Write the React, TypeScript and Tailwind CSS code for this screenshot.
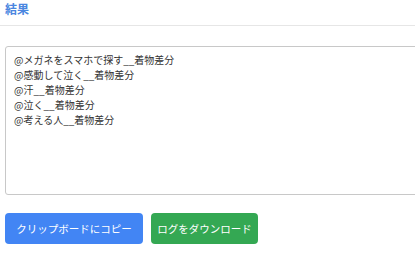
const lines = [
  "@メガネをスマホで探す__着物差分",
  "@感動して泣く__着物差分",
  "@汗__着物差分",
  "@泣く__着物差分",
  "@考える人__着物差分",
]

export default function App() {
  return (
    <div
      className="w-[415px] h-[253px] overflow-hidden bg-white"
      style={{ fontFamily: '"Noto Sans CJK JP", "Noto Sans", sans-serif' }}
    >
      <div className="w-[440px]">
        <div className="border-b border-[#e6e6e6] px-[5px] h-[26px] flex items-start">
          <h2 className="text-[12px] leading-[18px] font-bold text-[#4a86e0]">結果</h2>
        </div>
        <div className="px-[5px] pt-[20px]">
          <textarea
            readOnly
            value={lines.join("\n")}
            className="block w-[430px] h-[149px] resize-none border border-[#c8c8c8] rounded-[3px] pl-[8px] pt-[5px] text-[10px] leading-[15px] text-[#333] outline-none"
          />
          <div className="flex gap-[8px] mt-[18px]">
            <button className="h-[31px] w-[138px] rounded-[4px] bg-[#4285f4] text-white text-[10.5px]">
              クリップボードにコピー
            </button>
            <button className="h-[31px] w-[107px] rounded-[4px] bg-[#34a853] text-white text-[10.5px]">
              ログをダウンロード
            </button>
          </div>
        </div>
      </div>
    </div>
  )
}
